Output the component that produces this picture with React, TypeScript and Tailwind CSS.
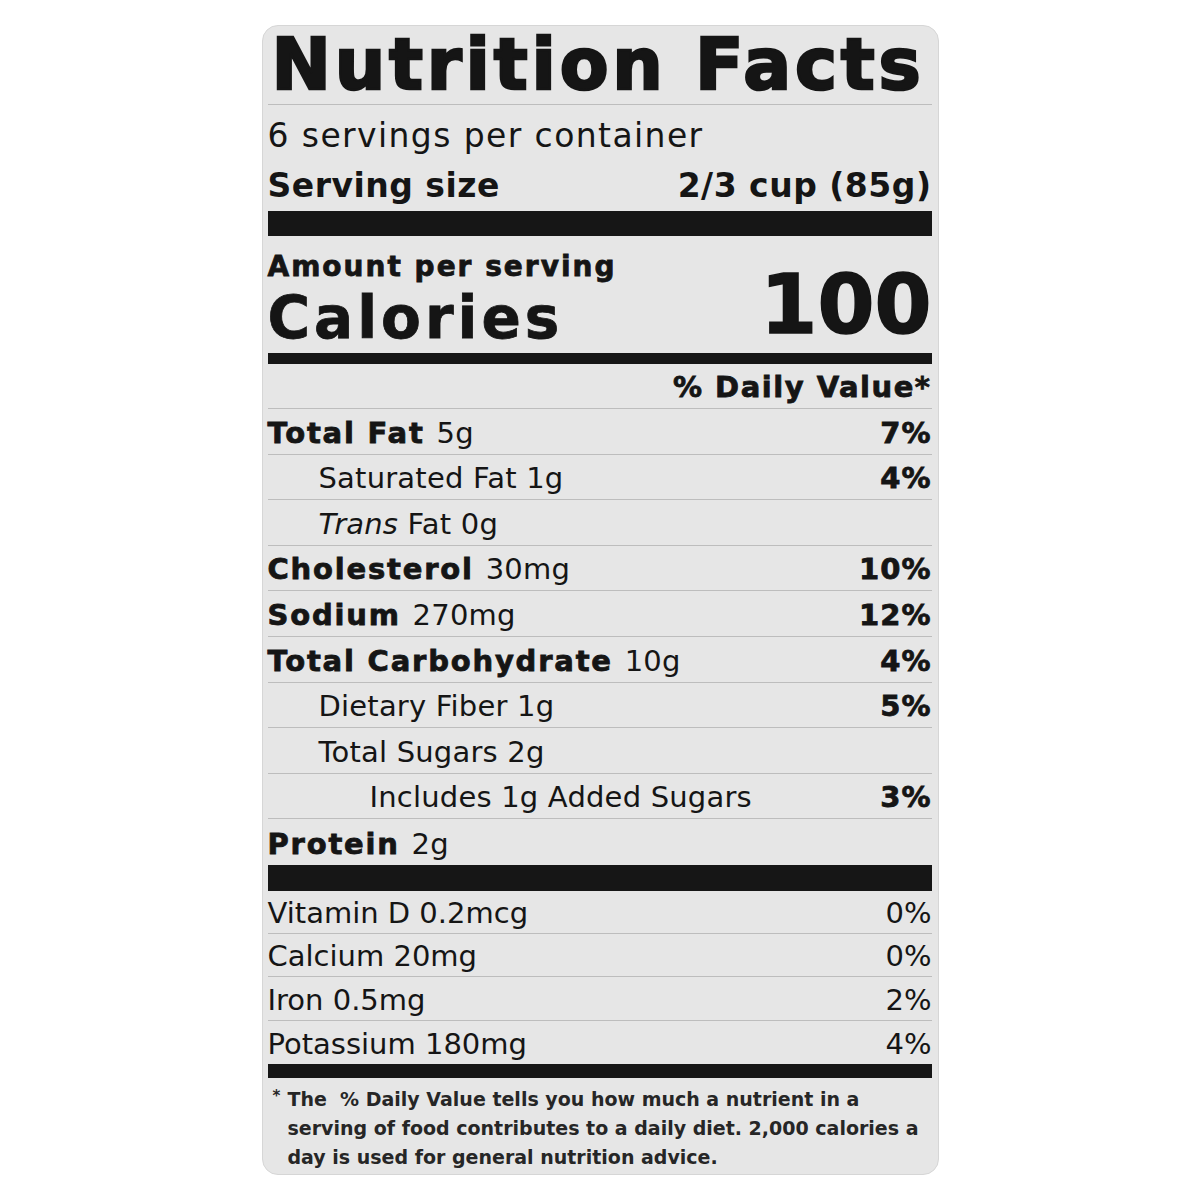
import React from "react";

type Nutrient = {
  bold?: string;
  italic?: string;
  text: string;
  dv?: string;
  indent?: 0 | 1 | 2;
};

const nutrients: Nutrient[] = [
  { bold: "Total Fat", text: "5g", dv: "7%" },
  { text: "Saturated Fat 1g", dv: "4%", indent: 1 },
  { italic: "Trans", text: "Fat 0g", indent: 1 },
  { bold: "Cholesterol", text: "30mg", dv: "10%" },
  { bold: "Sodium", text: "270mg", dv: "12%" },
  { bold: "Total Carbohydrate", text: "10g", dv: "4%" },
  { text: "Dietary Fiber 1g", dv: "5%", indent: 1 },
  { text: "Total Sugars 2g", indent: 1 },
  { text: "Includes 1g Added Sugars", dv: "3%", indent: 2 },
  { bold: "Protein", text: "2g" },
];

const minerals = [
  { name: "Vitamin D 0.2mcg", dv: "0%" },
  { name: "Calcium 20mg", dv: "0%" },
  { name: "Iron 0.5mg", dv: "2%" },
  { name: "Potassium 180mg", dv: "4%" },
];

const heavy = "font-bold [-webkit-text-stroke:0.8px_#151515]";

export default function App() {
  return (
    <div className="min-h-[1200px] bg-white pt-[25px] font-['DejaVu_Sans',sans-serif] text-[#151515]">
      <div className="mx-auto h-[1150px] w-[677px] rounded-[16px] border border-[#d6d6d6] bg-[#e6e6e6] pl-[5px] pr-[6px]">
        {/* title */}
        <div className="border-b border-[#bdbdbd]">
          <h1 className="pl-[4px] text-[71px] leading-[78px] font-bold tracking-[3.8px] whitespace-nowrap [-webkit-text-stroke:2.5px_#151515]">
            Nutrition Facts
          </h1>
        </div>

        <div className="pt-[6px] text-[33px] leading-[50px] tracking-[1.4px]">
          6 servings per container
        </div>
        <div className="flex justify-between text-[33px] leading-[50px] font-bold tracking-[0.5px]">
          <span>Serving size</span>
          <span>2/3 cup (85g)</span>
        </div>
        <div className="h-[25px] bg-[#161616]" />

        {/* calories */}
        <div className="flex h-[117px] justify-between">
          <div className="pt-[17px]">
            <div className={`text-[28px] leading-[28px] tracking-[2px] ${heavy}`}>
              Amount per serving
            </div>
            <div className={`mt-[8px] text-[58px] leading-[58px] tracking-[4px] ${heavy}`}>
              Calories
            </div>
          </div>
          <div className="pt-[28px] text-[82px] leading-[82px] font-bold [-webkit-text-stroke:1.5px_#151515]">
            100
          </div>
        </div>
        <div className="h-[11px] bg-[#161616]" />

        <div className={`flex h-[45px] items-end justify-end border-b border-[#bdbdbd] pb-[6px] text-[29px] leading-none tracking-[1.5px] ${heavy}`}>
          % Daily Value*
        </div>

        {nutrients.map((n, i) => (
          <div
            key={i}
            className={`flex h-[45.6px] items-end justify-between pb-[6px] text-[29px] leading-none tracking-[0.2px] ${
              i < nutrients.length - 1 ? "border-b border-[#bdbdbd]" : ""
            }`}
          >
            <span
              className={
                n.indent === 2 ? "pl-[102px]" : n.indent === 1 ? "pl-[51px]" : ""
              }
            >
              {n.bold && <span className={`tracking-[1.8px] ${heavy}`}>{n.bold} </span>}
              {n.italic && <span className="italic">{n.italic} </span>}
              {n.text}
            </span>
            {n.dv && <span className={`tracking-[1px] ${heavy}`}>{n.dv}</span>}
          </div>
        ))}
        <div className="h-[26px] bg-[#161616]" />

        {minerals.map((m, i) => (
          <div
            key={m.name}
            className={`flex h-[43.25px] items-end justify-between pb-[5px] text-[29px] leading-none ${
              i < minerals.length - 1 ? "border-b border-[#bdbdbd]" : ""
            }`}
          >
            <span>{m.name}</span>
            <span>{m.dv}</span>
          </div>
        ))}
        <div className="h-[14px] bg-[#161616]" />

        {/* footnote */}
        <div className="flex pt-[7px] text-[19px] leading-[29px] font-bold text-[#262626]">
          <span className="w-[20px] shrink-0 pl-[5px] text-[15px] leading-[22px]">*</span>
          <p>
            The&nbsp; % Daily Value tells you how much a nutrient in a
            <br />
            serving of food contributes to a daily diet. 2,000 calories a
            <br />
            day is used for general nutrition advice.
          </p>
        </div>
      </div>
    </div>
  );
}
